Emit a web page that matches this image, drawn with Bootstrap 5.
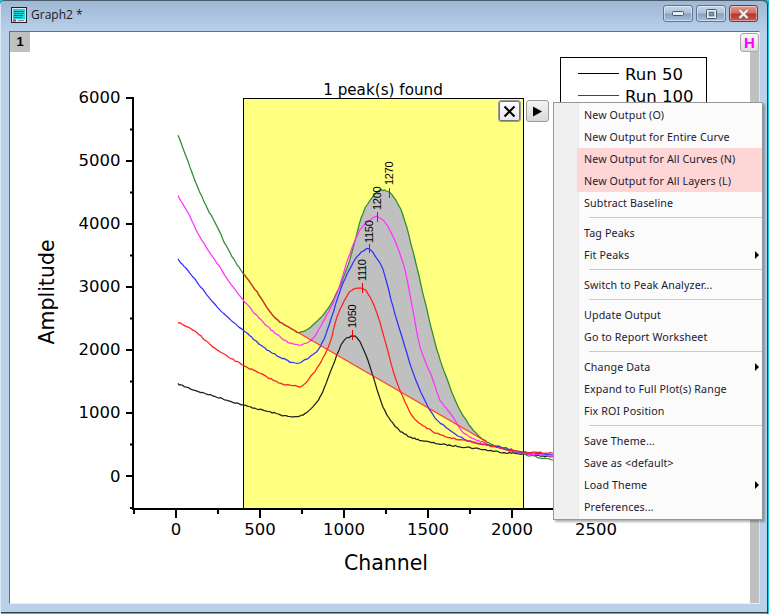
<!DOCTYPE html>
<html lang="en">
<head>
<meta charset="utf-8">
<title>Graph2</title>
<link href="https://cdn.jsdelivr.net/npm/bootstrap@5.3.0/dist/css/bootstrap.min.css" rel="stylesheet">
<style>
html,body{margin:0;padding:0;width:769px;height:614px;overflow:hidden;background:#1fc4e6}
.gwin{width:769px;height:614px;padding:0 9px 10px 9px;border-top:1px solid #4b5a6a;background:linear-gradient(#9fb8d4 0,#b9d1ea 32px,#b9d1ea 100%);box-shadow:inset 1px 0 0 #dce8f4,inset -1px 0 0 #1fc4e6,inset -2px 0 0 #2d4050,inset 0 -1px 0 #1fc4e6,inset 0 -2px 0 #2d4050;border-radius:5px 5px 0 0}
.gtitle{height:30px;flex:none;padding:0 0 3px 2px;gap:4px;font:12px "Open Sans","Noto Sans",sans-serif;color:#1a1a1a}
.gbtns{gap:3px;margin-top:-2px;margin-right:2px}
.wbtn{width:30px;height:17px;border:1px solid #5f7590;border-radius:3px;background:linear-gradient(#c6d8ea 0,#a9c1da 48%,#84a2c1 52%,#a6c0da 100%);display:flex;align-items:center;justify-content:center;box-shadow:inset 0 0 0 1px rgba(255,255,255,.45)}
.wbtn.wclose{width:29px;background:linear-gradient(#e39a8f 0,#cf6d5f 48%,#b2372a 52%,#c65a4c 100%);border-color:#6e3a3a}
.gclient{border:1px solid #6d6d6d;border-right-color:#e6e6e6;border-bottom-color:#eee;background:#fff;width:751px;height:573px;flex:none}
.gcanvas{display:block;width:750px;height:572px}
.gtab{position:absolute;left:0;top:0;width:20px;height:20px;background:#c0c0c0;font:bold 13px "Liberation Sans",sans-serif;text-align:center;line-height:20px;color:#000}
.hbtn{position:absolute;left:730px;top:1px;width:19px;height:19px;border:1px solid #a8a8a8;border-radius:3px;background:linear-gradient(#fbfbfb,#dcdcdc);color:#f0f;font:bold 15px/17px "Liberation Sans",sans-serif;text-align:center}
.rbtn{position:absolute;top:68px;width:23px;height:22px;border:1px solid #9a9a9a;border-radius:3px;background:linear-gradient(#f4f4f4,#d8d8d8);display:flex;align-items:center;justify-content:center}
.rbtn.rx{left:488px;background:linear-gradient(#fff,#e6e6e6);box-shadow:inset 0 0 0 1px #777}
.rbtn.rp{left:516px}
.pmenu.dropdown-menu{position:absolute;display:block;left:543px;top:70px;width:210px;height:418px;min-width:0;padding:1px 0 2px 0;margin:0;border:1px solid #979797;border-radius:0;background:linear-gradient(90deg,#f0f0f0 0,#f0f0f0 24px,#d7d7d7 24px,#fff 25px,#fbfbfb 25px);box-shadow:2px 2px 2px rgba(0,0,0,.3);font:10.7px/22px "Noto Sans","Open Sans",sans-serif;letter-spacing:.12px;color:#1c1c2c}
.pmenu .dropdown-item{height:22px;padding:0 0 0 30px;line-height:22px;color:#1c2030;position:relative}
.pmenu .mhi{background:#ffd6d6;margin-left:23px;padding-left:7px;width:calc(100% - 23px)}
.pmenu .dropdown-divider{margin:3px 0 4px 35px;height:1px;border-top:1px solid #c9c9c9;opacity:1;width:auto}
.pmenu .marrow{position:absolute;right:3px;top:7px;width:0;height:0;border-left:4px solid #000;border-top:4px solid transparent;border-bottom:4px solid transparent}
.tnum{font-family:"DejaVu Sans",sans-serif;font-size:16.5px;fill:#000}
.tlab{font-family:"DejaVu Sans",sans-serif;font-size:20.5px;fill:#000}
.tpk{font-family:"Liberation Sans",sans-serif;font-size:11px;letter-spacing:-.3px;fill:#000}
.ttl{font-family:"DejaVu Sans",sans-serif;font-size:15.2px;fill:#000}
</style>
</head>
<body>
<div class="gwin d-flex flex-column">
  <div class="gtitle d-flex align-items-center">
    <svg width="16" height="16" viewBox="0 0 16 16"><rect x=".5" y=".5" width="15" height="15" fill="#e4e4e4" stroke="#222"/><rect x="2" y="2" width="12" height="10" fill="#18d8e0"/><path d="M3 4.500h10M3 8.500h9" stroke="#7030a0"/><path d="M3 6.500h10M3 10.500h8" stroke="#208050"/><path d="M2 13.500h3" stroke="#e02060" stroke-width="2"/><path d="M7 13.500h6" stroke="#9080a0"/></svg>
    <span>Graph2 *</span>
    <div class="gbtns d-flex ms-auto">
      <div class="wbtn"><svg width="12" height="6" viewBox="0 0 12 6"><rect x=".5" y=".5" width="11" height="4" rx="1" fill="#e8eef5" stroke="#46586c"/></svg></div>
      <div class="wbtn"><svg width="11" height="10" viewBox="0 0 11 10"><rect x=".5" y=".5" width="10" height="9" rx="1" fill="#e8eef5" stroke="#46586c"/><rect x="3" y="3" width="5" height="4" fill="#7f93aa" stroke="#46586c" stroke-width=".6"/></svg></div>
      <div class="wbtn wclose"><svg width="13" height="10" viewBox="0 0 13 10"><path d="M2.500 1l8 8M10.500 1l-8 8" stroke="#8c6a68" stroke-width="3.600"/><path d="M2.500 1l8 8M10.500 1l-8 8" stroke="#f4f0f0" stroke-width="2.200"/></svg></div>
    </div>
  </div>
  <div class="gclient position-relative">
    <svg class="gcanvas" id="plot" viewBox="10 32 750 572" xmlns="http://www.w3.org/2000/svg">
      <rect x="750" y="50" width="9" height="553" fill="#c0c0c0"/>
      <rect x="560.5" y="57.5" width="146" height="200" fill="#fff" stroke="#000"/>
      <path d="M578 73.5h41" stroke="#000"/><path d="M578 95.5h41" stroke="#e00000"/>
      <text class="tnum" x="625" y="80">Run 50</text>
      <text class="tnum" x="625" y="102">Run 100</text>
      <rect x="243.5" y="98.5" width="280" height="410" fill="#ffff80" stroke="#000"/>
      <polygon id="fillpoly" fill="#c0c0c0"/>
      <g id="curves" fill="none" stroke-width="1.25"></g>
      <g fill="none" stroke="#000" stroke-width="2">
        <path d="M133 97v413M132 509h422"/>
        <path d="M126 98h7M126 161h7M126 224h7M126 287h7M126 350h7M126 413h7M126 476h7"/>
        <path d="M130 129.500h3M130 192.500h3M130 255.500h3M130 318.500h3M130 381.500h3M130 444.500h3M130 508h3"/>
        <path d="M176 509v9M260 509v9M344 509v9M428 509v9M512 509v9"/>
        <path d="M134 509v5M218 509v5M302 509v5M386 509v5M470 509v5"/>
      </g>
      <g stroke="#f00000" fill="none">
        <path d="M352.500 330v10M362.500 283v10M369.500 244v9M377.500 212v10M389.500 188v10"/>
      </g>
      <g>
        <text class="tpk" transform="translate(356,328) rotate(-90)">1050</text>
        <text class="tpk" transform="translate(366,281) rotate(-90)">1110</text>
        <text class="tpk" transform="translate(373,243) rotate(-90)">1150</text>
        <text class="tpk" transform="translate(381,210) rotate(-90)">1200</text>
        <text class="tpk" transform="translate(393,185) rotate(-90)">1270</text>
      </g>
      <text class="ttl" x="383" y="95" text-anchor="middle">1 peak(s) found</text>
      <g class="tnum" text-anchor="end">
        <text class="tnum" x="120.500" y="103">6000</text><text class="tnum" x="120.500" y="166">5000</text><text class="tnum" x="120.500" y="229">4000</text><text class="tnum" x="120.500" y="292">3000</text><text class="tnum" x="120.500" y="355">2000</text><text class="tnum" x="120.500" y="418">1000</text><text class="tnum" x="120.500" y="482">0</text>
      </g>
      <g text-anchor="middle">
        <text class="tnum" x="176" y="535">0</text><text class="tnum" x="260" y="535">500</text><text class="tnum" x="344" y="535">1000</text><text class="tnum" x="428" y="535">1500</text><text class="tnum" x="512" y="535">2000</text><text class="tnum" x="596" y="535">2500</text>
      </g>
      <text class="tlab" x="386" y="570" text-anchor="middle">Channel</text>
      <text class="tlab" transform="translate(54,292) rotate(-90)" text-anchor="middle">Amplitude</text>
    </svg>
    <div class="gtab">1</div>
    <div class="hbtn">H</div>
    <div class="rbtn rx"><svg width="13" height="13" viewBox="0 0 13 13"><path d="M1.500 1.500l10 10M11.500 1.500l-10 10" stroke="#000" stroke-width="2"/></svg></div>
    <div class="rbtn rp"><svg width="11" height="11" viewBox="0 0 11 11"><path d="M1 .5l9 5-9 5z" fill="#000"/></svg></div>
    <div class="pmenu dropdown-menu">
      <a class="dropdown-item">New Output (O)</a>
      <a class="dropdown-item">New Output for Entire Curve</a>
      <a class="dropdown-item mhi">New Output for All Curves (N)</a>
      <a class="dropdown-item mhi">New Output for All Layers (L)</a>
      <a class="dropdown-item">Subtract Baseline</a>
      <div class="dropdown-divider"></div>
      <a class="dropdown-item">Tag Peaks</a>
      <a class="dropdown-item">Fit Peaks<span class="marrow"></span></a>
      <div class="dropdown-divider"></div>
      <a class="dropdown-item">Switch to Peak Analyzer...</a>
      <div class="dropdown-divider"></div>
      <a class="dropdown-item">Update Output</a>
      <a class="dropdown-item">Go to Report Worksheet</a>
      <div class="dropdown-divider"></div>
      <a class="dropdown-item">Change Data<span class="marrow"></span></a>
      <a class="dropdown-item">Expand to Full Plot(s) Range</a>
      <a class="dropdown-item">Fix ROI Position</a>
      <div class="dropdown-divider"></div>
      <a class="dropdown-item">Save Theme...</a>
      <a class="dropdown-item">Save as &lt;default&gt;</a>
      <a class="dropdown-item">Load Theme<span class="marrow"></span></a>
      <a class="dropdown-item">Preferences...</a>
    </div>
  </div>
</div>
<script src="https://cdn.jsdelivr.net/npm/bootstrap@5.3.0/dist/js/bootstrap.bundle.min.js"></script>
<script>
(function(){
var D={
green:[[178,135],[190,167],[202,197],[217,227],[230,253],[243,273],[257,292],[270,312],[280,322],[293,330],[300,332],[313,325],[330,305],[347,268],[363,213],[377,192],[383,190],[392,195],[403,215],[415,260],[427,310],[437,350],[450,387],[460,410],[473,430],[487,442],[500,447],[523,454],[553,460]],
magenta:[[178,196],[190,217],[200,237],[217,263],[230,283],[243,300],[263,322],[280,337],[293,344],[303,344],[313,338],[323,322],[337,293],[350,253],[360,230],[373,218],[380,218],[390,230],[403,263],[412,305],[420,347],[433,380],[440,400],[453,417],[463,432],[477,440],[500,448],[523,453],[553,456]],
blue:[[178,259],[197,282],[217,307],[243,330],[263,347],[280,357],[295,363],[307,359],[320,347],[330,322],[343,283],[357,257],[367,249],[373,253],[383,270],[393,307],[403,340],[413,373],[423,397],[433,415],[443,425],[457,435],[473,442],[500,447],[523,452],[553,455]],
red:[[178,322],[197,333],[217,350],[243,365],[263,375],[280,383],[295,386],[303,385],[317,368],[330,343],[337,317],[350,292],[362,288],[370,297],[380,323],[393,370],[403,397],[413,417],[427,428],[443,436],[467,441],[500,448],[523,452],[553,453]],
black:[[178,384],[197,391],[217,397],[243,405],[270,412],[293,417],[307,412],[320,397],[330,373],[335,360],[343,342],[353,336],[360,342],[368,360],[372,373],[383,407],[397,428],[413,438],[440,444],[473,448],[500,452],[523,454],[553,457]]
};
var C={green:'#2f8a2f',magenta:'#ff30ff',blue:'#3030ff',red:'#ff2020',black:'#202020'};
var seed=7;function rnd(){seed=(seed*16807)%2147483647;return seed/2147483647-.5}
function smooth(p,j){var o=[];for(var i=0;i<p.length-1;i++){var a=p[Math.max(i-1,0)],b=p[i],c=p[i+1],d=p[Math.min(i+2,p.length-1)];var n=Math.max(1,Math.round((c[0]-b[0])/2));for(var k=0;k<n;k++){var t=k/n,t2=t*t,t3=t2*t;var f=function(q){return .5*(2*b[q]+(c[q]-a[q])*t+(2*a[q]-5*b[q]+4*c[q]-d[q])*t2+(3*b[q]-a[q]-3*c[q]+d[q])*t3)};o.push([f(0),f(1)+rnd()*j])}}o.push(p[p.length-1]);return o}
function str(o){return o.map(function(q){return q[0].toFixed(1)+','+q[1].toFixed(1)}).join(' ')}
var g=document.getElementById('curves'),NS='http://www.w3.org/2000/svg',gs=null;
['black','green','magenta','blue','red'].forEach(function(n){var s=smooth(D[n],1.3);if(n=='green')gs=s;var l=document.createElementNS(NS,'polyline');l.setAttribute('points',str(s));l.setAttribute('stroke',C[n]);g.appendChild(l)});
var upper=gs.filter(function(q){return q[0]>=298&&q[0]<=487});
document.getElementById('fillpoly').setAttribute('points',str(upper)+' 487,442 298,332');
var b=document.createElementNS(NS,'polyline');b.setAttribute('points',str(smooth([[243,273],[257,292],[270,312],[280,322]],.6))+' 487,442');b.setAttribute('stroke','#ff2020');b.setAttribute('opacity','.85');g.appendChild(b);
})();
</script>
</body>
</html>
